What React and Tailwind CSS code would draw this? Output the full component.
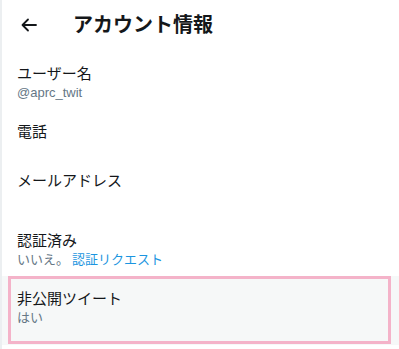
import React from 'react';

const font = { fontFamily: '"Noto Sans CJK JP", "Noto Sans", sans-serif' };

const Row = ({ title, sub, height }) => (
  <div className={`pl-[15px] pt-[10px] ${height}`}>
    <div className="text-[15px] leading-[20px] text-[#14171a]">{title}</div>
    {sub && <div className="text-[13px] leading-[17px] text-[#657786]">{sub}</div>}
  </div>
);

const App = () => {
  return (
    <div className="w-[399px] h-[349px] bg-white border-l-2 border-[#eceff1] overflow-hidden" style={font}>
      {/* header */}
      <div className="h-[53px] flex items-center">
        <button className="ml-[16px] -mt-[4px] w-[22px] h-[22px] flex items-center justify-center text-[#14171a]">
          <svg width="16" height="14" viewBox="0 0 16 14" fill="none" stroke="currentColor" strokeWidth="1.8" strokeLinecap="round" strokeLinejoin="round">
            <path d="M15 7H2" />
            <path d="M7 1.5L1.5 7L7 12.5" />
          </svg>
        </button>
        <h1 className="ml-[33px] text-[20px] font-bold leading-[24px] text-[#14171a] -mt-[5px]">アカウント情報</h1>
      </div>

      <Row title="ユーザー名" sub={<span style={{ fontFamily: '"Liberation Sans", "Noto Sans", sans-serif' }}>@aprc_twit</span>} height="h-[58px]" />
      <Row title="電話" height="h-[49px]" />
      <Row title="メールアドレス" height="h-[60px]" />
      <Row
        title="認証済み"
        sub={<span>いいえ。 <span className="text-[#1b95e0]">認証リクエスト</span></span>}
        height="h-[56px]"
      />

      {/* hovered row with highlight */}
      <div className="relative h-[69px] bg-[#f6f8f8]">
        <div className="absolute left-[6px] right-[8px] top-0 bottom-[1px] border-[3px] border-[#f4b3c9]" />
        <div className="pl-[15px] pt-[12px]">
          <div className="text-[15px] leading-[20px] text-[#14171a]">非公開ツイート</div>
          <div className="text-[13px] leading-[17px] text-[#657786]">はい</div>
        </div>
      </div>
    </div>
  );
};

export default App;
